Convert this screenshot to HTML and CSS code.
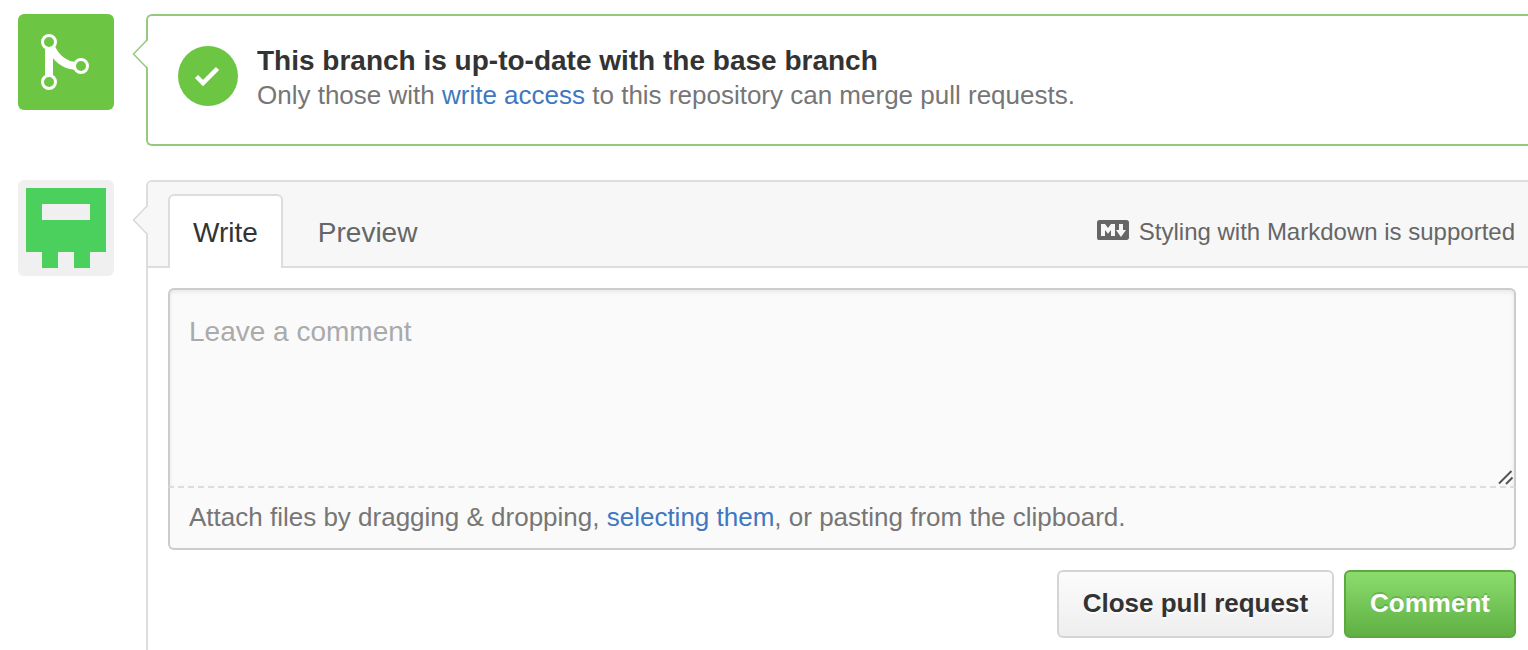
FILE: index.html
```html
<!DOCTYPE html>
<html lang="en">
<head>
<meta charset="utf-8">
<title>Pull request discussion</title>
<link rel="stylesheet" href="styles.css">
</head>
<body>
<main class="discussion">
  <section class="entry">
    <div class="entry-icon merge-icon">
      <svg class="icon-svg" viewBox="0 0 96 96" fill="none" stroke="#fff" aria-hidden="true">
        <path d="M31 30V66M32 31C37 43 45 52 60 52" stroke-width="8"/>
        <g fill="#6cc644" stroke-width="3"><circle cx="31" cy="28" r="6.500"/><circle cx="31" cy="68" r="6.500"/><circle cx="63" cy="52" r="6.500"/></g>
      </svg>
    </div>
    <div class="panel merge-panel">
      <svg class="caret" viewBox="0 0 16 32" aria-hidden="true"><path class="caret-fill" d="M16 2L2 16L16 30Z"/><path class="caret-line" d="M15 2L1.500 16L15 30"/></svg>
      <span class="status">
        <svg class="icon-svg" viewBox="0 0 60 60" fill="none" stroke="#fff" stroke-width="4.500" aria-hidden="true"><path d="M18.500 30.500L25 37L39.500 22.500"/></svg>
      </span>
      <div class="merge-text">
        <h2 class="merge-title">This branch is up-to-date with the base branch</h2>
        <p class="merge-note">Only those with <a class="link" href="#access">write access</a> to this repository can merge pull requests.</p>
      </div>
    </div>
  </section>

  <section class="entry comment-entry">
    <div class="entry-icon avatar">
      <svg class="icon-svg" viewBox="0 0 96 96" role="img" aria-label="Your avatar"><path fill="#4bd05e" fill-rule="evenodd" d="M8 8H88V72H72V88H56V72H40V88H24V72H8ZM24 24V40H72V24Z"/></svg>
    </div>
    <form class="panel comment-panel">
      <svg class="caret caret-gray" viewBox="0 0 16 32" aria-hidden="true"><path class="caret-fill" d="M16 2L2 16L16 30Z"/><path class="caret-line" d="M15 2L1.500 16L15 30"/></svg>
      <div class="tabs">
        <button class="tab tab-selected" type="button">Write</button>
        <button class="tab" type="button">Preview</button>
        <a class="markdown-help" href="#markdown">
          <svg class="markdown-icon" viewBox="0 3 16 10" aria-hidden="true"><path fill="currentColor" d="M14.850 3H1.150C.52 3 0 3.520 0 4.150v7.690C0 12.480.52 13 1.150 13h13.690c.64 0 1.150-.52 1.150-1.150v-7.700C16 3.520 15.480 3 14.850 3zM9 11H7V8L5.500 9.920 4 8v3H2V5h2l1.500 2L7 5h2v6zm2.990.5L9.500 8H11V5h2v3h1.500l-2.510 3.500z"/></svg>
          <span class="markdown-label">Styling with Markdown is supported</span>
        </a>
      </div>
      <div class="editor">
        <div class="field">
          <textarea class="comment-box" aria-label="Comment" placeholder="Leave a comment"></textarea>
          <svg class="grip" viewBox="0 0 16 16" fill="none" stroke="#555" stroke-width="2" aria-hidden="true"><path d="M1 14.500L13.500 2M8 15L14.500 8.500"/></svg>
        </div>
        <p class="attach">Attach files by dragging &amp; dropping, <a class="link" href="#files">selecting them</a>, or pasting from the clipboard.</p>
        <div class="actions">
          <button class="btn" type="button">Close pull request</button>
          <button class="btn btn-primary" type="submit">Comment</button>
        </div>
      </div>
    </form>
  </section>
</main>
</body>
</html>
```
FILE: styles.css
```css
* { box-sizing: border-box; }

body {
  margin: 0;
  background: #fff;
  color: #333;
  font-family: "Liberation Sans", Arial, sans-serif;
}

.discussion {
  display: flex;
  flex-direction: column;
  gap: 34px;
  min-height: 100vh;
  padding: 14px 0 0 18px;
}

.entry { display: flex; gap: 32px; }
.comment-entry { flex: 1; }

.entry-icon {
  flex: none;
  width: 96px;
  height: 96px;
  border-radius: 6px;
}
.merge-icon { background: #6cc644; }
.avatar { background: #f0f0f0; }
.icon-svg { display: block; width: 100%; height: 100%; }

.panel {
  position: relative;
  flex: 1;
  min-width: 0;
  border: 2px solid #ddd;
  border-right: 0;
  border-radius: 6px 0 0 6px;
}

.caret {
  position: absolute;
  top: 22px;
  left: -16px;
  width: 16px;
  height: 32px;
}
.caret-fill { fill: #fff; }
.caret-line { fill: none; stroke: #95c97e; stroke-width: 1.5; }
.caret-gray .caret-fill { fill: #f7f7f7; }
.caret-gray .caret-line { stroke: #d8d8d8; }

.merge-panel {
  display: flex;
  gap: 19px;
  padding: 27px 30px 33px;
  border-color: #95c97e;
}
.status {
  flex: none;
  width: 60px;
  height: 60px;
  margin-top: 3px;
  border-radius: 50%;
  background: #6cc644;
}
.merge-title { margin: 0; font-size: 28px; line-height: 36px; }
.merge-note { margin: 0; color: #767676; font-size: 26px; line-height: 32px; }
.link { color: #4078c0; text-decoration: none; }

.comment-panel { border-bottom: 0; border-bottom-left-radius: 0; }

.tabs {
  display: flex;
  padding: 12px 13px 0 20px;
  border-bottom: 2px solid #ddd;
  border-top-left-radius: 4px;
  background: #f7f7f7;
}
.tab {
  margin: 0 10px -2px 0;
  padding: 19px 23px 17px;
  border: 2px solid transparent;
  border-bottom: 0;
  border-radius: 6px 6px 0 0;
  background: none;
  color: #666;
  font: 28px/36px "Liberation Sans", Arial, sans-serif;
}
.tab-selected { border-color: #ddd; background: #fff; color: #333; }

.markdown-help {
  display: flex;
  align-items: center;
  gap: 10px;
  margin-left: auto;
  color: #666;
  font-size: 24px;
  line-height: 28px;
  text-decoration: none;
}
.markdown-icon { width: 32px; height: 20px; }
.markdown-label { padding-top: 4px; }

.editor { padding: 20px 12px 12px 20px; }
.field { position: relative; }
.comment-box {
  display: block;
  width: 100%;
  height: 200px;
  padding: 24px 19px;
  border: 2px solid #ccc;
  border-bottom: 2px dashed #ddd;
  border-radius: 6px 6px 0 0;
  background: #fafafa;
  box-shadow: inset 0 2px 4px rgba(0, 0, 0, 0.08);
  color: #333;
  font: 28px/36px "Liberation Sans", Arial, sans-serif;
  resize: none;
}
.comment-box::placeholder { color: #aaa; opacity: 1; }
.grip {
  position: absolute;
  right: 2px;
  bottom: 3px;
  width: 16px;
  height: 16px;
}
.attach {
  margin: 0;
  padding: 13px 19px 15px;
  border: 2px solid #ccc;
  border-top: 0;
  border-radius: 0 0 6px 6px;
  background: #fafafa;
  color: #767676;
  font-size: 26px;
  line-height: 32px;
}

.actions {
  display: flex;
  justify-content: flex-end;
  gap: 10px;
  margin-top: 20px;
}
.btn {
  padding: 15px 24px 17px;
  border: 2px solid #d5d5d5;
  border-radius: 6px;
  background: linear-gradient(#fcfcfc, #eee);
  color: #333;
  font: bold 26px/32px "Liberation Sans", Arial, sans-serif;
  text-shadow: 0 2px 0 rgba(255, 255, 255, 0.9);
}
.btn-primary {
  border-color: #5ca941;
  background: linear-gradient(#8add6d, #60b044);
  color: #fff;
  text-shadow: 0 -2px 0 rgba(0, 0, 0, 0.15);
}
```
